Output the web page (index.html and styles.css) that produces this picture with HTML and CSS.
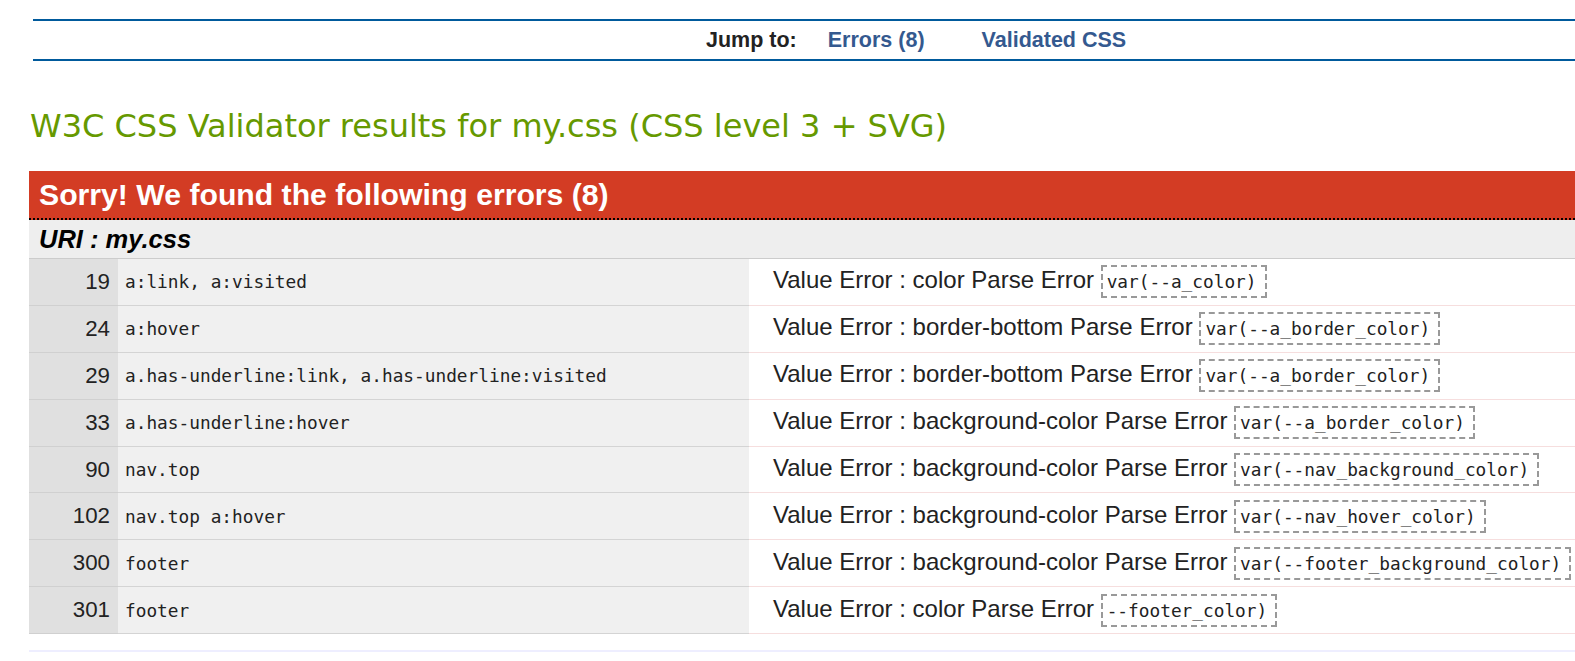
FILE: index.html
```html
<!DOCTYPE html>
<html lang="en">
<head>
<meta charset="utf-8">
<title>W3C CSS Validator results for my.css</title>
<link rel="stylesheet" href="styles.css">
</head>
<body>
<div class="page">
  <nav class="jump">
    <span class="jump-label">Jump to:</span>
    <a class="jump-link first" href="#errors">Errors (8)</a>
    <a class="jump-link" href="#css">Validated CSS</a>
  </nav>

  <h2 class="results-title">W3C CSS Validator results for my.css (CSS level 3 + SVG)</h2>

  <div class="errors" id="errors">
    <h3 class="errors-title">Sorry! We found the following errors (8)</h3>
    <div class="uri">URI : my.css</div>
    <table class="error-table">
      <colgroup>
        <col class="c-line">
        <col class="c-ctx">
        <col class="c-msg">
      </colgroup>
      <tbody>
        <tr><td class="linenum">19</td><td class="ctx">a:link, a:visited</td><td class="msg">Value Error : color Parse Error <span class="code">var(--a_color)</span></td></tr>
        <tr><td class="linenum">24</td><td class="ctx">a:hover</td><td class="msg">Value Error : border-bottom Parse Error <span class="code">var(--a_border_color)</span></td></tr>
        <tr><td class="linenum">29</td><td class="ctx">a.has-underline:link, a.has-underline:visited</td><td class="msg">Value Error : border-bottom Parse Error <span class="code">var(--a_border_color)</span></td></tr>
        <tr><td class="linenum">33</td><td class="ctx">a.has-underline:hover</td><td class="msg">Value Error : background-color Parse Error <span class="code">var(--a_border_color)</span></td></tr>
        <tr><td class="linenum">90</td><td class="ctx">nav.top</td><td class="msg">Value Error : background-color Parse Error <span class="code">var(--nav_background_color)</span></td></tr>
        <tr><td class="linenum">102</td><td class="ctx">nav.top a:hover</td><td class="msg">Value Error : background-color Parse Error <span class="code">var(--nav_hover_color)</span></td></tr>
        <tr><td class="linenum">300</td><td class="ctx">footer</td><td class="msg">Value Error : background-color Parse Error <span class="code">var(--footer_background_color)</span></td></tr>
        <tr><td class="linenum">301</td><td class="ctx">footer</td><td class="msg">Value Error : color Parse Error <span class="code">--footer_color)</span></td></tr>
      </tbody>
    </table>
  </div>
  <div class="next-section"></div>
</div>
</body>
</html>
```

FILE: styles.css
```css
html, body {
  margin: 0;
  padding: 0;
  background: #ffffff;
}

body {
  font-family: "Liberation Sans", Arial, sans-serif;
  color: #000;
  overflow: hidden;
}

.page {
  padding-left: 29px;
}

.jump {
  margin: 19px 0 0 4px;
  height: 38px;
  border-top: 2px solid #005a9c;
  border-bottom: 2px solid #005a9c;
  display: flex;
  align-items: center;
  padding-left: 673px;
  font-size: 21.5px;
  font-weight: bold;
}

.jump-label {
  color: #222;
}

.jump-link {
  color: #34598f;
  text-decoration: none;
  margin-left: 57px;
}

.jump-link.first {
  margin-left: 31px;
}

.results-title {
  margin: 47px 0 26px 1px;
  font-family: "DejaVu Sans", Verdana, sans-serif;
  font-weight: normal;
  font-size: 32px;
  line-height: 37px;
  color: #669900;
}

.errors-title {
  margin: 0;
  height: 47px;
  line-height: 47px;
  padding-left: 10px;
  background: #d33c24;
  color: #fff;
  font-size: 30.2px;
  font-weight: bold;
  border-bottom: 2px dotted #000;
}

.uri {
  height: 38px;
  line-height: 38px;
  padding-left: 10px;
  background: #eeeeee;
  font-size: 25.5px;
  font-weight: bold;
  font-style: italic;
  border-bottom: 1px solid #cccccc;
}

.error-table {
  width: 100%;
  border-collapse: collapse;
  table-layout: fixed;
}

.c-line { width: 89px; }
.c-ctx { width: 631px; }

.error-table td {
  height: 45.9px;
  padding: 0;
  vertical-align: middle;
  white-space: nowrap;
}

.linenum {
  background: #e0e0e0;
  text-align: right;
  padding-right: 8px !important;
  font-size: 22.3px;
  color: #222;
  border-bottom: 1px solid #d0d0d0;
}

.ctx {
  background: #f0f0f0;
  padding-left: 7px !important;
  font-family: "DejaVu Sans Mono", monospace;
  font-size: 17.8px;
  color: #222;
  border-bottom: 1px solid #d4d4d4;
}

.msg {
  background: #ffffff;
  padding-left: 24px !important;
  font-size: 24px;
  color: #222;
  border-bottom: 1px solid #f6dede;
}

.code {
  display: inline-block;
  border: 2px dashed #999999;
  padding: 4px 8px 4px 4px;
  font-family: "DejaVu Sans Mono", monospace;
  font-size: 17.8px;
  line-height: 21px;
  vertical-align: middle;
}

.next-section {
  margin-top: 16px;
  border-top: 2px solid #eeeeff;
}
```
